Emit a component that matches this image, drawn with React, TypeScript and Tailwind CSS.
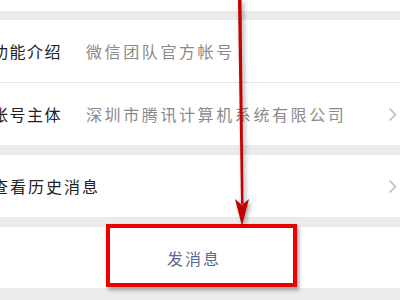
const cjk = { fontFamily: '"Noto Sans CJK SC", "Noto Sans", sans-serif' };

const Chevron = () => (
  <svg width="9" height="15" viewBox="0 0 9 15" className="shrink-0">
    <polyline points="1.5,1.5 7.5,7.5 1.5,13.5" fill="none" stroke="#bdbdbd" strokeWidth="1.6" />
  </svg>
);

type Row = { label: string; value?: string; arrow?: boolean };

const InfoRow = ({ label, value, arrow }: Row) => (
  <div className="flex h-[62px] items-center pr-[3px]">
    <div className="-ml-[8px] w-[94px] shrink-0 whitespace-nowrap text-[16px] tracking-[1.5px] text-[#222]">
      {label}
    </div>
    <div className="flex-1 whitespace-nowrap text-[16px] tracking-[2.6px] text-[#8a8a8a]">{value}</div>
    {arrow && <Chevron />}
  </div>
);

export default function App() {
  return (
    <div className="relative h-[300px] w-[400px] overflow-hidden bg-[#ebebeb]" style={cjk}>
      <div className="h-[11px] bg-white" />
      <div className="h-[9px]" />

      {/* account info */}
      <div className="bg-white">
        <InfoRow label="功能介绍" value="微信团队官方帐号" />
        <div className="h-px bg-[#e6e6e6]" />
        <InfoRow label="帐号主体" value="深圳市腾讯计算机系统有限公司" arrow />
      </div>

      <div className="h-[10px]" />

      <div className="bg-white">
        <div className="flex h-[62px] items-center pr-[3px]">
          <div className="-ml-[8px] flex-1 whitespace-nowrap text-[16px] tracking-[2px] text-[#222]">
            查看历史消息
          </div>
          <Chevron />
        </div>
      </div>

      <div className="h-[10px]" />

      <div className="flex h-[61px] items-center justify-center bg-white pr-[12px]">
        <span className="text-[16px] tracking-[2px] text-[#5a6b96]">发消息</span>
      </div>

      {/* annotation overlay */}
      <div className="absolute left-[106px] top-[224px] h-[63px] w-[191px] border-4 border-[#ee0000] shadow-[2px_3px_4px_rgba(0,0,0,0.35)]" />
      <svg
        className="absolute left-0 top-0"
        width="400"
        height="300"
        viewBox="0 0 400 300"
        style={{ filter: 'drop-shadow(2px 2px 2px rgba(0,0,0,0.35))' }}
      >
        <polygon points="238,0 241.5,0 243.5,204 241,204" fill="#c40000" />
        <polygon points="235,199 242,205 249,199 242,226" fill="#c40000" />
      </svg>
    </div>
  );
}
